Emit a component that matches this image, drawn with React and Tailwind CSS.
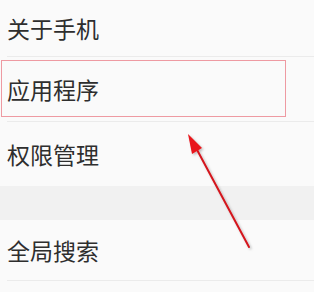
import React from "react";

function Row({ label, h, divider = true }) {
  return (
    <div className={`flex items-center ${h}`}>
      <div className="flex-1 h-full flex items-center pl-[7px] relative">
        <span className="text-[23px] leading-none text-[#2e2e2e]">{label}</span>
        {divider && <div className="absolute left-[7px] right-0 bottom-0 h-px bg-[#ebebeb]" />}
      </div>
    </div>
  );
}

export default function App() {
  return (
    <div
      className="relative w-[314px] h-[292px] overflow-hidden bg-[#fafafa]"
      style={{ fontFamily: '"Noto Sans CJK SC", "Noto Sans", sans-serif' }}
    >
      <Row label="关于手机" h="h-[57px]" />
      <Row label="应用程序" h="h-[65px]" />
      <Row label="权限管理" h="h-[64px]" divider={false} />
      <div className="h-[34px] bg-[#f1f1f1]" />
      <Row label="全局搜索" h="h-[61px]" />

      <div className="absolute left-[1px] top-[60px] w-[285px] h-[57px] border-[1.5px] border-[#ee9aa2]" />

      <svg className="absolute left-0 top-0" width="314" height="292" viewBox="0 0 314 292">
        <defs>
          <filter id="sh" x="-20%" y="-20%" width="140%" height="140%">
            <feDropShadow dx="1.5" dy="1.5" stdDeviation="1" floodColor="#000" floodOpacity="0.25" />
          </filter>
        </defs>
        <g filter="url(#sh)">
          <line x1="249" y1="247" x2="195" y2="146" stroke="#d4161e" strokeWidth="2" strokeLinecap="round" />
          <polygon points="188,134 202,148 192,154" fill="#e8141c" />
        </g>
      </svg>
    </div>
  );
}
